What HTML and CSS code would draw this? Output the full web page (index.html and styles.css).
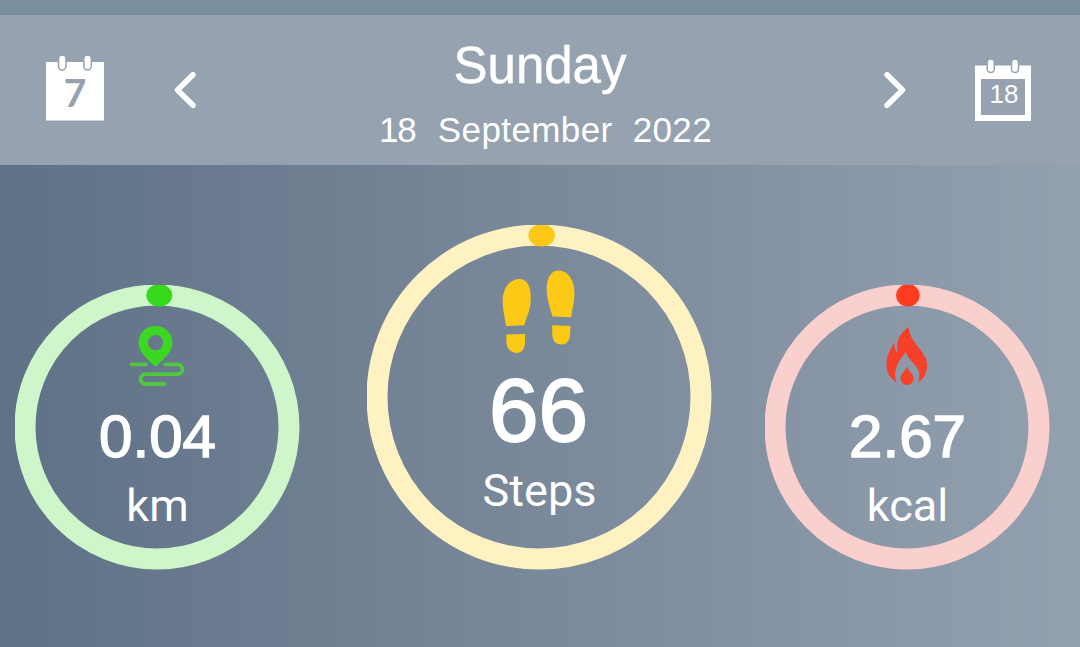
FILE: styles.css
```
*{
	margin: 0px;
	padding: 0px;
	box-sizing: border-box;
}
body{
	width: 1080px;
	height: 647px;
	overflow: hidden;
	color: #fff;
	font-family: "Liberation Sans", Arial, sans-serif;
	background: #7b8a9b;
}
svg{
	display: block;
}
.top{
	height: 15px;
	background: #7a90a1;
	border-bottom: 1px solid #788692;
}
.header{
	height: 150px;
	background: #96a2b0;
	display: flex;
	align-items: flex-start;
	padding: 0 49px 0 46px;
}
.cal{
	position: relative;
}
.week{
	width: 58px;
	margin-top: 40px;
}
.today{
	width: 56px;
	margin-top: 44px;
}
.hook{
	fill: #fff;
	stroke: #96a2b0;
	stroke-width: 1.5;
}
.cal span{
	position: absolute;
	left: 0;
	width: 100%;
	text-align: center;
}
.week span{
	top: 13px;
	line-height: 48px;
	font-family: Lato, sans-serif;
	font-weight: bold;
	font-size: 39px;
	color: #96a2b0;
}
.today span{
	top: 20px;
	left: 1px;
	line-height: 30px;
	font-size: 26px;
}
.arrow{
	margin-top: 56px;
	fill: none;
	stroke: #fff;
	stroke-width: 5.5;
	stroke-linecap: round;
	stroke-linejoin: round;
}
.prev{
	margin-left: 69px;
}
.next{
	margin-right: 68px;
}
.date{
	flex: 1;
	text-align: center;
}
.day{
	font-size: 51px;
	line-height: 60px;
	margin-top: 21px;
	-webkit-text-stroke: 0.5px #fff;
}
.full{
	display: flex;
	justify-content: center;
	font-size: 35px;
	line-height: 40px;
	margin: 14px 0 0 11px;
}
.dd{
	letter-spacing: -1px;
}
.mm{
	letter-spacing: 0.4px;
	margin: 0 20px 0 22px;
}
.yy{
	letter-spacing: 0.4px;
}
.main{
	height: 482px;
	padding: 0 30px 77px 15px;
	display: flex;
	justify-content: space-between;
	align-items: flex-end;
	background: linear-gradient(to right, #5f7187, #7a899a 50%, #93a0b0);
}
.gauge{
	position: relative;
	width: 285px;
	height: 285px;
	display: flex;
	flex-direction: column;
	align-items: center;
}
.ring{
	position: absolute;
	left: 0;
	top: 0;
	width: 100%;
	height: 100%;
	fill: none;
	stroke-width: 21;
}
.steps{
	width: 345px;
	height: 345px;
	margin-left: 14px;
}
.km .icon{
	margin: 38px 3px 0 0;
}
.kcal .icon{
	margin: 41px 1px 0 0;
}
.steps .icon{
	margin: 45px 3px 0 0;
}
.num{
	font-size: 60px;
	line-height: 70px;
	margin-top: 15px;
	-webkit-text-stroke: 1.5px #fff;
}
.unit{
	font-family: Roboto, sans-serif;
	font-size: 45px;
	line-height: 52px;
	margin-top: 8px;
}
.kcal .num{
	margin-top: 16px;
}
.steps .num{
	font-size: 89px;
	line-height: 100px;
	margin: 6px 2px 0 0;
	-webkit-text-stroke: 2px #fff;
}
.steps .unit{
	margin-top: 5px;
}
```
FILE: index.html
```
<!DOCTYPE html>
<html>
<head>
	<meta charset="utf-8">
	<title>Steps</title>
	<link rel="stylesheet" href="styles.css">
</head>
<body>
	<div class="top"></div>
	<div class="header">
		<div class="cal week">
			<svg width="58" height="66" viewBox="0 0 58 66">
				<path d="M0 7H58V65.500H0Z" fill="#fff"/>
				<rect x="12.500" y="0" width="7.500" height="15" rx="3.750" class="hook"/>
				<rect x="37.800" y="0" width="7.500" height="15" rx="3.750" class="hook"/>
			</svg>
			<span>7</span>
		</div>
		<svg class="arrow prev" width="24" height="38" viewBox="0 0 24 38"><path d="M20 3.700L4.500 19L20 34.300"/></svg>
		<div class="date">
			<div class="day">Sunday</div>
			<div class="full"><span class="dd">18</span><span class="mm">September</span><span class="yy">2022</span></div>
		</div>
		<svg class="arrow next" width="24" height="38" viewBox="0 0 24 38"><path d="M4 3.700L19.500 19L4 34.300"/></svg>
		<div class="cal today">
			<svg width="56" height="63" viewBox="0 0 56 63">
				<path d="M0 6.500H56V62H0ZM6 20V56H50V20Z" fill="#fff" fill-rule="evenodd"/>
				<rect x="12.300" y="0" width="7" height="13.500" rx="3.500" class="hook"/>
				<rect x="36.500" y="0" width="7" height="13.500" rx="3.500" class="hook"/>
			</svg>
			<span>18</span>
		</div>
	</div>
	<div class="main">
		<div class="gauge km">
			<svg class="ring" viewBox="0 0 285 285">
				<circle cx="142" cy="142" r="132" stroke="#cff5cb"/>
				<ellipse cx="144.300" cy="10.300" rx="13" ry="11.200" fill="#37d91d"/>
			</svg>
			<svg class="icon" width="58" height="64" viewBox="0 0 58 64">
				<path d="M28.500 3C18.500 3 11.500 10.500 11.500 19.500C11.500 28 17 33 27 42.500Q28.500 43.800 30 42.500C40 33 45.500 28 45.500 19.500C45.500 10.500 38.500 3 28.500 3ZM28.500 12A7.600 7.600 0 1 1 28.500 27.200A7.600 7.600 0 1 1 28.500 12Z" fill="#3bd721" fill-rule="evenodd"/>
				<path d="M4.500 41.300H19M38 41.300H50.500A4.900 4.900 0 0 1 50.500 51.200H18.500A4.900 4.900 0 0 0 18.500 61H37.500" fill="none" stroke="#4fc83e" stroke-width="3.800" stroke-linecap="round"/>
			</svg>
			<div class="num">0.04</div>
			<div class="unit">km</div>
		</div>
		<div class="gauge steps">
			<svg class="ring" viewBox="0 0 345 345">
				<circle cx="172" cy="172" r="162" stroke="#fff2c2"/>
				<ellipse cx="174.700" cy="10.300" rx="13.300" ry="11.200" fill="#fbc818"/>
			</svg>
			<svg class="icon" width="74" height="84" viewBox="0 0 74 84" fill="#fcc917">
				<path d="M5 56C4 47 1.500 40 1.700 30C2 17 9.500 9 18.500 9C27 9 30.200 18 29.700 29C29.700 40 25.500 47 23.300 55.300Z"/>
				<path d="M5.200 64.600L24 64L24 73C23.500 79.500 20.500 83 15.500 83C10 83 6 79 5.500 73Z"/>
				<path d="M51.500 46.500C49 37 45.800 30 45.700 19C46 8 49.500 .5 58 .5C67 .5 73 10 73.500 22C73.800 32 71 39 70.300 47.200Z"/>
				<path d="M51.200 55.300L69.500 55.900L69 65C68.500 71.500 65 74.500 60 74.500C55 74.500 51.500 71 51.200 64Z"/>
			</svg>
			<div class="num">66</div>
			<div class="unit">Steps</div>
		</div>
		<div class="gauge kcal">
			<svg class="ring" viewBox="0 0 285 285">
				<circle cx="142" cy="142" r="132" stroke="#f9d0cd"/>
				<ellipse cx="142.900" cy="10.300" rx="11.800" ry="11.200" fill="#ff3c20"/>
			</svg>
			<svg class="icon" width="42" height="60" viewBox="0 0 42 60" fill="#f6402a">
				<path d="M22.500 1C10 11 11 18 11.500 27C9 24 8.200 21 8.500 16.500C3 25 .5 31 .5 39C.5 47 5 53 10.500 56.500C6 45 12 36 20 25.500C20.500 34 33.500 39 33.500 49C33.500 52 33 54.500 32 57C38 53 41.200 46 41.200 39.500C41.200 25 24 18 22.500 1Z"/>
				<path d="M21 41C18.500 46 14.500 48 14.500 52.500C14.500 56 17.200 59 21 59C25 59 27.500 56 27.500 52.500C27.500 48 23 46 21 41Z"/>
			</svg>
			<div class="num">2.67</div>
			<div class="unit">kcal</div>
		</div>
	</div>
</body>
</html>
```
